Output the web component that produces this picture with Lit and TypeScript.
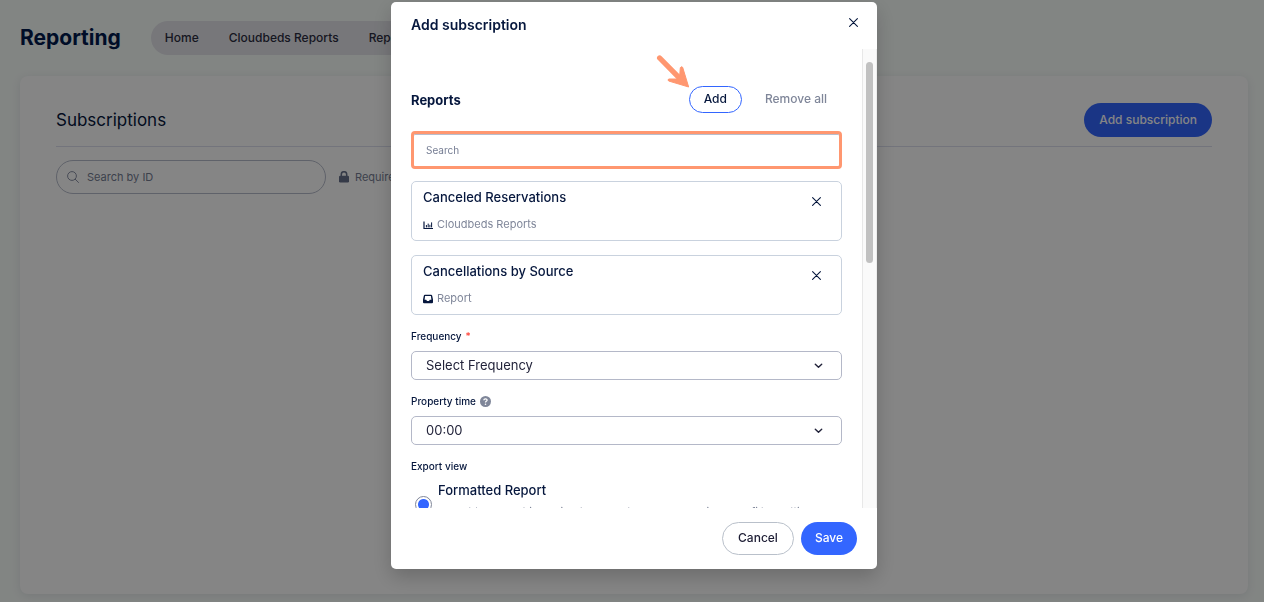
import { LitElement, html, css, svg } from "lit";
import { customElement, property, state } from "lit/decorators.js";

interface ReportItem {
  name: string;
  source: string;
  kind: "chart" | "inbox";
}

const closeIcon = html`<svg width="9" height="9" viewBox="0 0 9 9" aria-hidden="true">
  <path d="M.6 .6 8.4 8.4M8.4 .6 .6 8.4" fill="none" stroke="currentColor" stroke-width="1.1" stroke-linecap="round" />
</svg>`;

const chartShape = svg`<path d="M1 1.5v7h9" fill="none" stroke="currentColor" stroke-width="1.2" />
  <path d="M3.4 5v2.4M5.2 3.6v3.8M6.9 4.8v2.6M8.6 2.4v5" fill="none" stroke="currentColor" stroke-width="1" />`;

const inboxShape = svg`<path fill="currentColor" fill-rule="evenodd"
  d="M2 .8h6a1.2 1.2 0 0 1 1.2 1L10 5.4v2.8a1 1 0 0 1-1 1H1a1 1 0 0 1-1-1V5.4L.8 1.8A1.2 1.2 0 0 1 2 .8Zm.1 1.2L1.6 5.8h1.6l.8 1.3h2l.8-1.3h1.6L7.9 2Z" />`;

@customElement("report-card")
export class ReportCard extends LitElement {
  @property({ attribute: false }) item!: ReportItem;

  static styles = css`
    :host {
      display: block;
    }
    .card {
      display: flex;
      justify-content: space-between;
      align-items: flex-start;
      border: 1px solid #c9d2de;
      border-radius: 5px;
      padding: 5px 20px 7px 11px;
    }
    .name {
      margin: 0;
      font-size: 13px;
      font-weight: 500;
      line-height: 20px;
      color: #06173d;
    }
    .source {
      display: flex;
      align-items: center;
      gap: 4px;
      margin-top: 8px;
      font-size: 11px;
      line-height: 18px;
      color: #7f8699;
    }
    .source svg {
      margin-top: 2px;
      color: #06173d;
    }
    .remove {
      display: flex;
      margin-top: 10px;
      padding: 0;
      border: 0;
      background: none;
      color: #06173d;
    }
  `;

  render() {
    return html`<article class="card">
      <div>
        <h3 class="name">${this.item.name}</h3>
        <div class="source">
          <svg width="10" height="10" viewBox="0 0 10 10" aria-hidden="true">
            ${this.item.kind === "chart" ? chartShape : inboxShape}
          </svg>
          <span>${this.item.source}</span>
        </div>
      </div>
      <button class="remove" aria-label="Remove ${this.item.name}">${closeIcon}</button>
    </article>`;
  }
}

@customElement("app-root")
export class AppRoot extends LitElement {
  @state() private reports: ReportItem[] = [
    { name: "Canceled Reservations", source: "Cloudbeds Reports", kind: "chart" },
    { name: "Cancellations by Source", source: "Report", kind: "inbox" },
  ];

  static styles = css`
    :host {
      display: block;
      font-family: Inter, "Open Sans", sans-serif;
      color: #06173d;
    }
    * {
      box-sizing: border-box;
    }
    button,
    input,
    select {
      font-family: inherit;
      margin: 0;
    }
    h1,
    h2,
    h3,
    p {
      margin: 0;
    }

    .page {
      display: flex;
      flex-direction: column;
      min-height: 100vh;
      padding: 21px 16px 8px 20px;
      background: #fafffc;
    }
    .top {
      display: flex;
      align-items: center;
      gap: 30px;
      margin-bottom: 21px;
    }
    .title {
      font-size: 21px;
      font-weight: 700;
      line-height: 34px;
      color: #001a4d;
    }
    .tabs {
      display: flex;
      align-items: center;
      gap: 30px;
      height: 34px;
      padding: 0 14px 2px;
      border-radius: 17px;
      background: #e4e5ea;
    }
    .tabs a {
      font-size: 12px;
      font-weight: 500;
      color: #2b2c40;
      text-decoration: none;
      white-space: nowrap;
    }
    .panel {
      flex: 1;
      padding: 27px 36px;
      border-radius: 8px;
      background: #ffffff;
      box-shadow: 0 2px 10px rgba(60, 60, 90, 0.12);
    }
    .panel-head {
      display: flex;
      align-items: center;
      justify-content: space-between;
      padding-bottom: 9px;
      border-bottom: 1px solid #dcdfee;
    }
    .panel-title {
      font-size: 17px;
      font-weight: 400;
      line-height: 34px;
    }
    .filters {
      display: flex;
      align-items: center;
      gap: 13px;
      margin-top: 13px;
    }
    .id-search {
      display: flex;
      align-items: center;
      gap: 8px;
      width: 270px;
      height: 34px;
      padding: 0 10px;
      border: 1px solid #b7bccb;
      border-radius: 17px;
      color: #8a90a5;
    }
    .id-search input {
      flex: 1;
      min-width: 0;
      padding: 0;
      border: 0;
      outline: 0;
      background: none;
      font-size: 11px;
    }
    input::placeholder {
      color: #757d93;
      opacity: 1;
    }
    .locked {
      display: flex;
      align-items: center;
      gap: 6px;
      font-size: 11px;
      color: #757d93;
    }

    .btn {
      height: 33px;
      padding: 0 14px 2px;
      border: 1px solid transparent;
      border-radius: 17px;
      background: none;
      font-size: 12px;
      font-weight: 500;
      white-space: nowrap;
    }
    .primary {
      padding: 0 13px 2px;
      background: #3366ff;
      color: #ffffff;
    }
    .tall {
      height: 34px;
      padding: 0 14px 2px;
    }
    .neutral {
      padding: 0 15px 2px;
      border-color: #b9c0ca;
      color: #1c1c33;
    }
    .small {
      height: 27px;
    }
    .outlined {
      border-color: #3366ff;
      color: #06173d;
    }
    .muted {
      padding: 0 14px 2px;
      color: #7f8699;
    }

    .backdrop {
      position: fixed;
      inset: 0;
      display: flex;
      justify-content: center;
      padding: 2px 0 33px 4px;
      background: rgba(0, 0, 0, 0.48);
    }
    .dialog {
      display: flex;
      flex-direction: column;
      width: 100%;
      max-width: 486px;
      overflow: hidden;
      border-radius: 5px;
      background: #ffffff;
      box-shadow: 0 8px 20px rgba(0, 0, 0, 0.2);
    }
    .dialog-head {
      display: flex;
      justify-content: space-between;
      align-items: flex-start;
      padding: 13px 19px 14px 20px;
    }
    .dialog-title {
      font-size: 14px;
      font-weight: 600;
      line-height: 20px;
    }
    .close {
      display: flex;
      margin-top: 3px;
      padding: 0;
      border: 0;
      background: none;
      color: #06173d;
    }
    .dialog-body {
      display: flex;
      flex: 1;
      min-height: 0;
    }
    .form {
      flex: 1;
      min-width: 0;
      overflow: hidden;
      padding: 37px 20px 0;
    }
    .track {
      width: 15px;
      padding: 13px 3px;
      border-left: 1px solid #e8e8e8;
      border-right: 1px solid #ededed;
      background: #fafafa;
    }
    .thumb {
      height: 201px;
      border-radius: 4px;
      background: #c1c1c1;
    }
    .dialog-foot {
      display: flex;
      justify-content: flex-end;
      gap: 7px;
      padding: 14px 20px;
    }

    .row {
      display: flex;
      align-items: center;
      gap: 8px;
    }
    .section {
      flex: 1;
      font-size: 13px;
      font-weight: 700;
      line-height: 20px;
    }
    .pointed {
      position: relative;
    }
    .arrow {
      position: absolute;
      right: 100%;
      bottom: 100%;
      margin: 0 -1px -3px 0;
      pointer-events: none;
    }
    .search {
      display: block;
      width: 100%;
      height: 38px;
      margin-top: 18px;
      padding: 0 12px;
      border: 3px solid #ff9770;
      border-radius: 4px;
      outline: 0;
      box-shadow: inset 0 1px #b9bdcc;
      background: #ffffff;
      font-size: 10px;
    }
    .cards {
      display: grid;
      gap: 14px;
      margin-top: 12px;
    }
    .field-label {
      display: flex;
      align-items: center;
      gap: 4px;
      font-size: 10px;
      font-weight: 500;
      line-height: 16px;
      padding: 0;
    }
    .required {
      color: #ff3b30;
    }
    .field {
      margin-top: 13px;
    }
    .select {
      display: grid;
      align-items: center;
      margin-top: 7px;
    }
    .select select,
    .select svg {
      grid-area: 1 / 1;
    }
    .select select {
      appearance: none;
      width: 100%;
      height: 29px;
      padding: 0 40px 2px 14px;
      border: 1px solid #b4b8c8;
      border-radius: 5px;
      background: #ffffff;
      color: #22233a;
      font-size: 13px;
    }
    .select svg {
      justify-self: end;
      margin-right: 19px;
      pointer-events: none;
    }
    .group {
      min-width: 0;
      margin: 13px 0 0;
      padding: 0;
      border: 0;
    }
    .option {
      display: flex;
      align-items: center;
      gap: 6px;
      margin-top: 5px;
      padding-left: 4px;
    }
    .option input {
      appearance: none;
      flex: none;
      width: 17px;
      height: 17px;
      border: 1px solid #7f8699;
      border-radius: 50%;
      background: radial-gradient(circle, #3366ff 5px, #ffffff 6px);
    }
    .option-title {
      display: block;
      font-size: 13px;
      font-weight: 500;
      line-height: 22px;
    }
    .option-text {
      display: block;
      padding-bottom: 6px;
      font-size: 11px;
      line-height: 22px;
      color: #7f8699;
    }
  `;

  private chevron() {
    return html`<svg width="9" height="6" viewBox="0 0 9 6" aria-hidden="true">
      <path d="M1.3 1.2 4.5 4.3 7.7 1.2" fill="none" stroke="#22233a" stroke-width="1.4" stroke-linecap="round" stroke-linejoin="round" />
    </svg>`;
  }

  render() {
    return html`
      <div class="page">
        <header class="top">
          <h1 class="title">Reporting</h1>
          <nav class="tabs">
            <a href="#home">Home</a>
            <a href="#cloudbeds">Cloudbeds Reports</a>
            <a href="#reports">Reports</a>
          </nav>
        </header>
        <main class="panel">
          <div class="panel-head">
            <h2 class="panel-title">Subscriptions</h2>
            <button class="btn primary tall">Add subscription</button>
          </div>
          <div class="filters">
            <label class="id-search">
              <svg width="12" height="12" viewBox="0 0 12 12" aria-hidden="true">
                <circle cx="5" cy="5" r="4.4" fill="none" stroke="currentColor" />
                <path d="m8.2 8.2 3.3 3.3" stroke="currentColor" stroke-linecap="round" />
              </svg>
              <input type="text" placeholder="Search by ID" aria-label="Search by ID" />
            </label>
            <span class="locked">
              <svg width="10" height="12" viewBox="0 0 10 12" aria-hidden="true">
                <path d="M2.3 5V3.4a2.7 2.7 0 0 1 5.4 0V5" fill="none" stroke="#66708a" stroke-width="1.5" />
                <rect x="0" y="4.8" width="10" height="6.7" rx="1.2" fill="#66708a" />
              </svg>
              Required
            </span>
          </div>
        </main>
      </div>

      <div class="backdrop">
        <div class="dialog" role="dialog" aria-modal="true" aria-labelledby="dialog-title">
          <header class="dialog-head">
            <h2 class="dialog-title" id="dialog-title">Add subscription</h2>
            <button class="close" aria-label="Close">${closeIcon}</button>
          </header>
          <div class="dialog-body">
            <div class="form">
              <div class="row">
                <h3 class="section">Reports</h3>
                <div class="pointed">
                  <button class="btn small outlined">Add</button>
                  <svg class="arrow" width="34" height="35" viewBox="48 162 102 105" aria-hidden="true">
                    <path d="M59 174 120 236" stroke="#ff9770" stroke-width="16" stroke-linecap="round" />
                    <path d="M146 261 128 202 Q124 198 121 203 L119 228 110 237 86 237 Q82 240 86 243Z" fill="#ff9770" stroke="#ff9770" stroke-width="3" stroke-linejoin="round" />
                  </svg>
                </div>
                <button class="btn small muted">Remove all</button>
              </div>
              <input class="search" type="text" placeholder="Search" aria-label="Search reports" />
              <div class="cards">
                ${this.reports.map((item) => html`<report-card .item=${item}></report-card>`)}
              </div>
              <div class="field">
                <label class="field-label" for="frequency">Frequency <span class="required">*</span></label>
                <div class="select">
                  <select id="frequency"><option>Select Frequency</option></select>
                  ${this.chevron()}
                </div>
              </div>
              <div class="field">
                <label class="field-label" for="time">
                  Property time
                  <svg width="11" height="11" viewBox="0 0 11 11" aria-hidden="true">
                    <circle cx="5.5" cy="5.5" r="5.5" fill="#7f8699" />
                    <path d="M3.8 4.3C3.9 2.4 7.2 2.5 7.1 4.3 7 5.4 5.5 5.3 5.5 6.5" fill="none" stroke="#fff" stroke-width="1.3" />
                    <circle cx="5.5" cy="8.2" r=".8" fill="#fff" />
                  </svg>
                </label>
                <div class="select">
                  <select id="time"><option>00:00</option></select>
                  ${this.chevron()}
                </div>
              </div>
              <fieldset class="group">
                <legend class="field-label">Export view</legend>
                <label class="option">
                  <input type="radio" name="view" checked />
                  <span>
                    <span class="option-title">Formatted Report</span>
                    <span class="option-text">Export the report including the report header, grouping, and filter settings</span>
                  </span>
                </label>
              </fieldset>
            </div>
            <div class="track"><div class="thumb"></div></div>
          </div>
          <footer class="dialog-foot">
            <button class="btn neutral">Cancel</button>
            <button class="btn primary">Save</button>
          </footer>
        </div>
      </div>
    `;
  }
}
